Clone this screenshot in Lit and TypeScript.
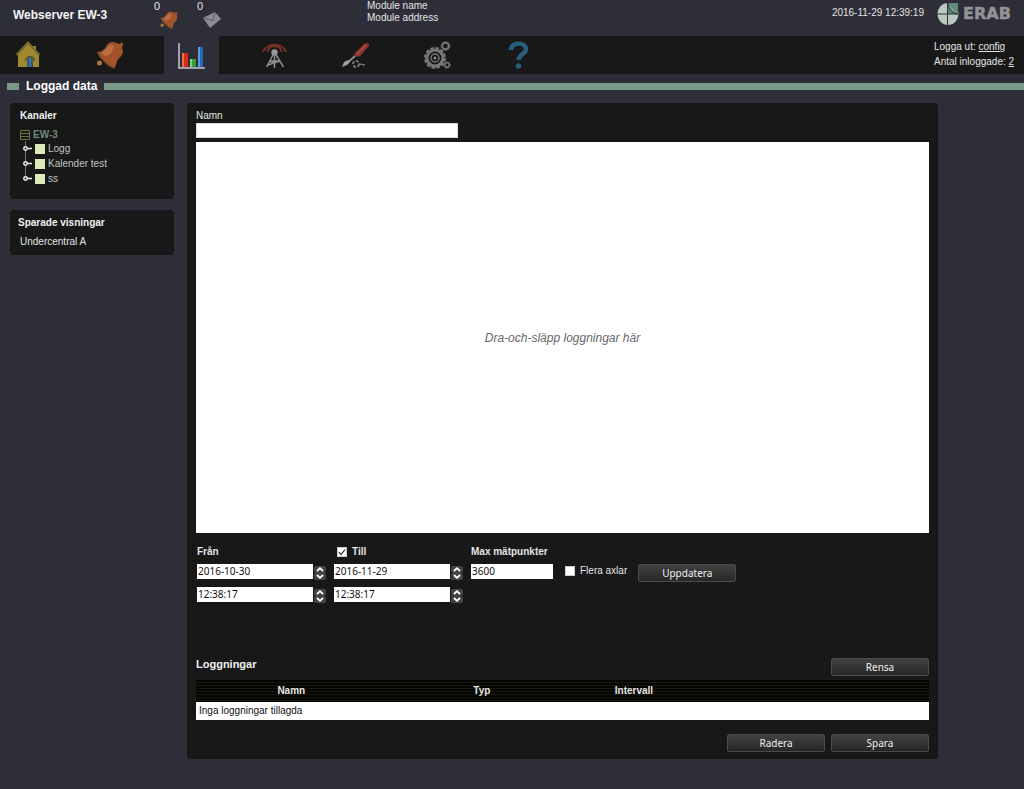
import { LitElement, html, svg, css } from "lit";
import { customElement } from "lit/decorators.js";

const bell = svg`
  <g>
    <path d="M1.500 11 C6 11 9 8 11 4 C13 1 17 0 20 2 C22 2.500 23.500 3 24.500 2.500 C25 0.500 28 1.500 27 4 C26.500 5 26 6 26 7 C28 11 26 15 23 17 C20 20 21 24 18.500 27 C16 28 2 15 1.500 11Z" fill="#a3532b"/>
    <path d="M5 11.500 C10 10 11 5 15 3.500 C19 3 18 8 15 12 C13 14 11 15 9 15Z" fill="#b96f3f"/>
    <path d="M1.500 11 C4 17 12 25 18.500 27" fill="none" stroke="#8a4a28" stroke-width="1.500"/>
    <circle cx="3.500" cy="22" r="2.500" fill="#a77735"/>
  </g>`;

const icons: Record<string, unknown> = {
  home: svg`
    <path d="M3 13 L14 2 L19 7 V5 H22 V10 L25 13 V26 H4 V13Z" fill="#a08a30"/>
    <path d="M2.500 14 L14 1.500 L25.500 14" fill="none" stroke="#77682f" stroke-width="2"/>
    <path d="M13 26 V19 A3 3 0 0 1 19 19 V26Z" fill="#31577c"/>
    <path d="M11.500 20 A4.500 4.500 0 0 1 20.500 20" fill="none" stroke="#5a5228" stroke-width="1.500"/>
    <path d="M16 17 V26" stroke="#5c8caf"/>`,
  alarm: bell,
  chart: svg`
    <path d="M1 2 V27 H27" fill="none" stroke="#c9c9cf" stroke-width="1.500"/>
    <path d="M4 12 H10 V26 H4Z" fill="#d92a18"/><path d="M4 12 H6 V26 H4Z" fill="#f26a50"/>
    <path d="M12 18 H18 V26 H12Z" fill="#3b9d3f"/><path d="M12 18 H14 V26 H12Z" fill="#83cf7c"/>
    <path d="M20 6 H25 V26 H20Z" fill="#2468b4"/><path d="M20 6 H22 V26 H20Z" fill="#5a9bdd"/>`,
  antenna: svg`
    <g fill="none" stroke="#783027" stroke-width="2"><path d="M3 11 A12 10 0 0 1 26 11"/><path d="M7.500 11 A7 6 0 0 1 21.500 11"/></g>
    <circle cx="14.500" cy="11.500" r="3.200" fill="#999"/>
    <path d="M13.500 13 L6.500 26 M15.500 13 L23.500 26 M14.500 13 V27 M10 20 H20 L8 24 M19 20 L10 21" fill="none" stroke="#8d8d8d" stroke-width="1.500"/>`,
  tools: svg`
    <path d="M13 12 L22 3 C25 1 28 2 27 5 L18 15 C15 17 11 15 13 12Z" fill="#8c342d"/>
    <path d="M15 13 L24 4" stroke="#b9635a"/>
    <path d="M13 15 L4 23" stroke="#8b8b8b" stroke-width="2"/>
    <path d="M0 26 L2 21 L6 19 L8 21 L5 24Z" fill="#a0a0a0"/>
    <circle cx="14" cy="23" r="3" fill="none" stroke="#777" stroke-width="2" stroke-dasharray="3 1.500"/>
    <path d="M17 23 L23 24" stroke="#777" stroke-width="1.500"/>`,
  gears: svg`
    <g fill="none" stroke="#777">
      <circle cx="11" cy="17" r="8" stroke-width="3"/><circle cx="11" cy="17" r="10" stroke-width="2" stroke-dasharray="3.500 1.740"/>
      <circle cx="11" cy="17" r="4" stroke-width="1.500"/>
      <circle cx="21.500" cy="5" r="3.300" stroke-width="2"/><circle cx="21.500" cy="5" r="4.400" stroke-dasharray="1.500 1.300"/>
      <circle cx="23" cy="24" r="2.200" stroke-width="1.500"/><circle cx="23" cy="24" r="3.200" stroke-dasharray="1.500 1.200"/>
    </g><circle cx="11" cy="17" r="1.500" fill="#888"/>`,
  help: svg`
    <path d="M5 9 C5 0 21 1 20 9 C19.500 13 13 13 12.500 19" fill="none" stroke="#285d7c" stroke-width="4.500"/>
    <circle cx="12.500" cy="25" r="2.700" fill="#285d7c"/>`,
};

const icon = (name: string) => html`<svg class="icon" viewBox="0 0 28 28" aria-hidden="true">${icons[name]}</svg>`;

@customElement("tree-item")
class TreeItem extends LitElement {
  static properties = { label: {}, last: { type: Boolean } };
  declare label: string;
  declare last: boolean;
  static styles = css`
    :host { display: flex; align-items: center; height: 15px; }
    .key { width: 15px; height: 15px; flex: none; }
    .box { width: 10px; height: 10px; background: #dcebb9; margin-right: 3px; flex: none; }
    a { color: #c4c4c4; text-decoration: none; }
  `;
  render() {
    return html`<svg class="key" viewBox="0 0 15 15" aria-hidden="true">
      <path d=${this.last ? "M5.500 0 V7" : "M5.500 0 V15"} stroke="#777"/>
      <circle cx="5.500" cy="7.500" r="1.700" fill="#181818" stroke="#eee" stroke-width="1.500"/>
      <path d="M7 7.500 H12" stroke="#eee" stroke-width="1.500"/></svg>
      <span class="box"></span><a href="#">${this.label}</a>`;
  }
}

@customElement("spin-box")
class SpinBox extends LitElement {
  static properties = { value: {}, label: {} };
  declare value: string;
  declare label: string;
  static styles = css`
    :host { display: flex; align-items: flex-start; gap: 1px; }
    input {
      width: 116px; height: 15px; box-sizing: border-box; border: 0; padding: 0 1px;
      background: #fff; color: #111; font: 10px/15px "Noto Sans", sans-serif; border-radius: 0;
    }
    .steps { display: flex; flex-direction: column; padding-top: 2px; }
    button {
      display: flex; align-items: center; justify-content: center; width: 12px; height: 7px;
      padding: 0; border: 0; border-radius: 2px; background: #444;
    }
    svg { width: 8px; height: 5px; }
  `;
  render() {
    return html`<input type="text" aria-label=${this.label} .value=${this.value} />
      <span class="steps">
        <button aria-label="Upp"><svg viewBox="0 0 8 5"><path d="M1 4 L4 1.200 L7 4" fill="none" stroke="#fff" stroke-width="1.800"/></svg></button>
        <button aria-label="Ner"><svg viewBox="0 0 8 5"><path d="M1 1 L4 3.800 L7 1" fill="none" stroke="#fff" stroke-width="1.800"/></svg></button>
      </span>`;
  }
}

@customElement("app-root")
class AppRoot extends LitElement {
  static styles = css`
    :host {
      display: block; min-height: 100vh; background: #2d2e38; color: #e4e4e4;
      font: 10px/12px "Liberation Sans", Arial, sans-serif;
    }
    * { box-sizing: border-box; }
    h1, h2, h3, p { margin: 0; }
    a { color: inherit; }
    .top { display: flex; height: 36px; padding-right: 9px; }
    .top h1 { width: 153px; padding: 8px 0 0 13px; font-size: 12px; line-height: 14px; color: #f4f4f4; }
    .counter { display: flex; width: 43px; padding-left: 1px; }
    .counter .num { font-size: 11px; line-height: 13px; }
    .counter svg { width: 18px; height: 18px; margin-top: 11px; }
    .module { padding-left: 128px; white-space: nowrap; }
    .clock { margin-left: auto; padding-top: 7px; white-space: nowrap; }
    .logo { width: 78px; height: 24px; margin: 2px 0 0 13px; }
    .nav { display: flex; height: 38px; background: #181818; padding-right: 10px; }
    .nav .tabs { display: flex; gap: 27px; }
    .nav .tabs a { display: flex; align-items: center; justify-content: center; width: 55px; }
    .nav .tabs .active { background: #2d2e38; }
    .icon { width: 28px; height: 28px; }
    .session { margin-left: auto; width: 80px; padding-top: 3px; line-height: 15px; white-space: nowrap; }
    .title { display: flex; align-items: center; gap: 7px; height: 24px; padding-left: 7px; }
    .title::before, .title::after { content: ""; height: 7px; background: #799986; }
    .title::before { width: 12px; }
    .title::after { flex: 1; }
    .title h2 { font-size: 12px; line-height: 14px; color: #fff; }
    .body { display: grid; grid-template-columns: 164px minmax(0, 751px); gap: 13px; padding: 5px 10px 30px; align-items: start; }
    .side { display: grid; gap: 11px; }
    .panel { background: #181818; border-radius: 4px; }
    .panel h3 { font-size: 10px; line-height: 12px; color: #f0f0f0; }
    .tree { padding: 7px 10px 13px; }
    .root { display: flex; align-items: center; gap: 3px; height: 12px; margin: 7px 0 0; color: #6d8a79; font-weight: bold; }
    .root svg { width: 10px; height: 10px; }
    .saved { padding: 7px 8px; }
    .saved a { display: block; margin: 7px 2px 0; text-decoration: none; }
    .main { padding: 7px 9px; border-radius: 3px; }
    .name { display: block; }
    .name input { display: block; width: 262px; height: 15px; margin-top: 1px; border: 1px solid #ddd; background: #fff; padding: 0 2px; }
    .drop {
      display: flex; align-items: center; justify-content: center; height: 391px; margin: 4px 0 0;
      background: #fff; color: #666; font-size: 12px; font-style: italic;
    }
    .form { display: flex; height: 124px; padding: 13px 1px 0; }
    .field { display: flex; flex-direction: column; gap: 6px; width: 137px; }
    .field .head { display: flex; align-items: center; height: 12px; font-weight: bold; }
    input[type="checkbox"] {
      appearance: none; width: 10px; height: 10px; margin: 0; background: #fff; border: 1px solid #ccc; flex: none;
    }
    .till { gap: 5px; padding-left: 3px; }
    .check { position: relative; display: flex; }
    .check svg { position: absolute; inset: 0; width: 10px; height: 10px; pointer-events: none; }
    .spins { display: grid; gap: 7px; }
    .max { width: 94px; }
    .max input { width: 82px; height: 15px; border: 0; padding: 0 1px; background: #fff; color: #111; font: 10px/15px "Noto Sans", sans-serif; }
    .axes { display: flex; align-items: center; gap: 5px; height: 12px; margin: 19px 11px 0 0; white-space: nowrap; }
    .button {
      width: 98px; height: 18px; padding: 0; border: 1px solid #4b4b4b; border-radius: 2px;
      background: linear-gradient(#414141, #272727); color: #eee; font: 10px/16px "Noto Sans", sans-serif;
    }
    .form .button { margin-top: 18px; }
    .listhead { display: flex; justify-content: space-between; align-items: flex-start; height: 22px; margin-top: 1px; }
    .listhead h3 { font-size: 11px; line-height: 13px; }
    table { width: 100%; border-collapse: collapse; table-layout: fixed; }
    th { height: 22px; padding: 0; font-weight: bold; }
    thead { background: repeating-linear-gradient(#050502 0 2px, #17180c 2px 3px); }
    td { height: 18px; padding: 0 3px; background: #fff; color: #111; }
    .c1 { width: 26%; } .c2 { width: 26%; } .c3 { width: 15.5%; }
    .actions { display: flex; justify-content: flex-end; gap: 6px; margin-top: 14px; }
  `;

  render() {
    const tabs: [string, string][] = [
      ["home", "Hem"], ["alarm", "Larm"], ["chart", "Loggad data"], ["antenna", "Kommunikation"],
      ["tools", "Verktyg"], ["gears", "Inställningar"], ["help", "Hjälp"],
    ];
    return html`
      <header class="top">
        <h1>Webserver EW-3</h1>
        <span class="counter"><span class="num">0</span><svg viewBox="0 0 28 28" aria-hidden="true">${bell}</svg></span>
        <span class="counter"><span class="num">0</span><svg viewBox="0 0 18 18" aria-hidden="true">
          <path d="M0 7 L12 1 L18 8 L7 17Z" fill="#8a8b93"/><path d="M0 7 L10 9.500 L12 1" fill="none" stroke="#5c5d66"/></svg></span>
        <div class="module"><p>Module name</p><p>Module address</p></div>
        <time class="clock">2016-11-29 12:39:19</time>
        <svg class="logo" viewBox="0 0 78 24" role="img" aria-label="ERAB">
          <ellipse cx="11" cy="12" rx="10.500" ry="11" fill="#b9c8bf"/>
          <path d="M11 12 V1 H21 V12Z" fill="#5f8a76"/>
          <path d="M11 1 C12 8 15 11 21 12" fill="#789c8a"/>
          <path d="M10.500 1 V23 M0 12 H21 M11 1 C12 8 15 11 21 12" fill="none" stroke="#2d2e38"/>
          <text x="26" y="17" font-family="DejaVu Sans" font-weight="bold" font-size="16" fill="#929297" stroke="#929297" stroke-width=".5">ERAB</text>
        </svg>
      </header>
      <nav class="nav">
        <div class="tabs">${tabs.map(([id, label]) => html`<a href="#" class=${id === "chart" ? "active" : ""} aria-label=${label}>${icon(id)}</a>`)}</div>
        <div class="session"><p>Logga ut: <a href="#">config</a></p><p>Antal inloggade: <a href="#">2</a></p></div>
      </nav>
      <div class="title"><h2>Loggad data</h2></div>
      <div class="body">
        <aside class="side">
          <section class="panel tree">
            <h3>Kanaler</h3>
            <div class="root"><svg viewBox="0 0 10 10" aria-hidden="true"><path d="M.5 .5 H9.500 V9.500 H.5Z M0 3.500 H10 M0 6.500 H10" fill="none" stroke="#6d7040"/></svg>EW-3</div>
            <tree-item label="Logg"></tree-item><tree-item label="Kalender test"></tree-item><tree-item label="ss" last></tree-item>
          </section>
          <section class="panel saved"><h3>Sparade visningar</h3><a href="#">Undercentral A</a></section>
        </aside>
        <main class="panel main">
          <label class="name">Namn<input type="text" /></label>
          <div class="drop">Dra-och-släpp loggningar här</div>
          <div class="form">
            <div class="field">
              <div class="head">Från</div>
              <div class="spins"><spin-box label="Från datum" value="2016-10-30"></spin-box><spin-box label="Från tid" value="12:38:17"></spin-box></div>
            </div>
            <div class="field">
              <label class="head till"><span class="check"><input type="checkbox" checked /><svg viewBox="0 0 10 10"><path d="M2 5 L4 7.500 L8 2.500" fill="none" stroke="#222" stroke-width="1.200"/></svg></span>Till</label>
              <div class="spins"><spin-box label="Till datum" value="2016-11-29"></spin-box><spin-box label="Till tid" value="12:38:17"></spin-box></div>
            </div>
            <div class="field max">
              <label class="head" for="max">Max mätpunkter</label>
              <input id="max" type="text" value="3600" />
            </div>
            <label class="axes"><input type="checkbox" />Flera axlar</label>
            <button class="button">Uppdatera</button>
          </div>
          <div class="listhead"><h3>Loggningar</h3><button class="button">Rensa</button></div>
          <table>
            <colgroup><col class="c1" /><col class="c2" /><col class="c3" /><col /></colgroup>
            <thead><tr><th>Namn</th><th>Typ</th><th>Intervall</th><th></th></tr></thead>
            <tbody><tr><td colspan="4">Inga loggningar tillagda</td></tr></tbody>
          </table>
          <div class="actions"><button class="button">Radera</button><button class="button">Spara</button></div>
        </main>
      </div>`;
  }
}
